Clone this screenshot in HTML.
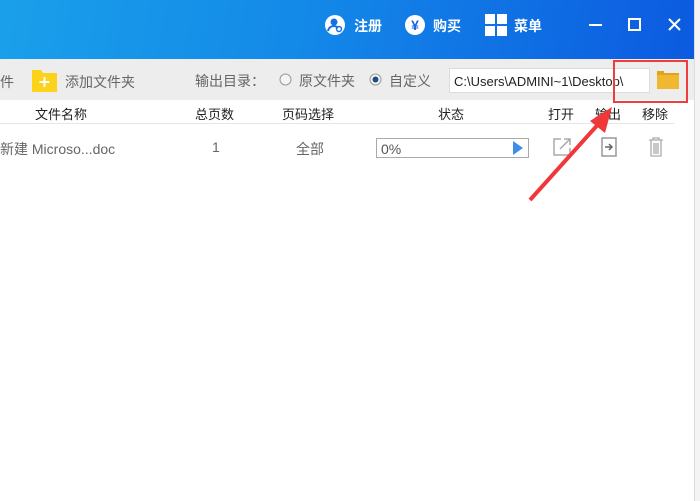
<!DOCTYPE html>
<html><head><meta charset="utf-8"><style>
*{margin:0;padding:0;box-sizing:border-box}
body{width:700px;height:501px;position:relative;overflow:hidden;background:#fff;font-family:"Liberation Sans","Noto Sans CJK SC",sans-serif;}
.t{position:absolute;white-space:nowrap}
#title{position:absolute;left:0;top:0;width:694px;height:59px;background:linear-gradient(100deg,#1aa0ea 0%,#1388e8 45%,#0c5ae0 100%)}
#tool{position:absolute;left:0;top:59px;width:694px;height:41px;background:#ededed}
#edge{position:absolute;left:694px;top:0;width:6px;height:501px;background:#f4f4f4;border-left:1px solid #ddd}
.w{color:#fff;font-size:14px;font-weight:bold}
.g{color:#666;font-size:14px}
.h{color:#222;font-size:13px}
</style></head><body>
<div id="title"></div>
<div id="tool"></div>
<div id="edge"></div>
<svg class="t" style="left:324px;top:14px" width="22" height="22"><circle cx="11" cy="11" r="10" fill="#fff"/><circle cx="10" cy="8" r="3.5" fill="#1570e6"/><path d="M4 17c1-4 4-5 6-5s3 1 4 2" stroke="#1570e6" stroke-width="2" fill="none"/><circle cx="15" cy="15" r="2.5" fill="none" stroke="#1570e6" stroke-width="1.5"/></svg>
<div class="t w" style="left:354px;top:16px">注册</div>
<svg class="t" style="left:404px;top:14px" width="22" height="22"><circle cx="11" cy="11" r="10" fill="#fff"/><text x="11" y="16" font-size="14" font-weight="bold" fill="#1565e2" text-anchor="middle" font-family="Liberation Sans">¥</text></svg>
<div class="t w" style="left:433px;top:16px">购买</div>
<svg class="t" style="left:485px;top:14px" width="22" height="22"><rect x="0" y="0" width="10" height="10" fill="#fff"/><rect x="12" y="0" width="10" height="10" fill="#fff"/><rect x="0" y="12" width="10" height="10" fill="#fff"/><rect x="12" y="12" width="10" height="10" fill="#fff"/></svg>
<div class="t w" style="left:514px;top:16px">菜单</div>
<svg class="t" style="left:586px;top:14px" width="100" height="22"><path d="M3 11h13" stroke="#fff" stroke-width="2"/><rect x="43" y="5" width="11" height="11" stroke="#fff" stroke-width="2" fill="none"/><path d="M83 5l11 11M94 5l-11 11" stroke="#fff" stroke-width="2"/></svg>
<div class="t g" style="left:0;top:72px">件</div>
<svg class="t" style="left:32px;top:68px" width="25" height="24"><path d="M0 2h9l2 3h14v19H0z" fill="#fdd21a"/><path d="M12.5 9v10M7.5 14h10" stroke="#fff" stroke-width="2"/></svg>
<div class="t g" style="left:65px;top:72px">添加文件夹</div>
<div class="t g" style="left:195px;top:71px">输出目录：</div>
<svg class="t" style="left:279px;top:73px" width="13" height="13"><circle cx="6.5" cy="6.5" r="5.5" fill="#f4f4f4" stroke="#999"/></svg>
<div class="t g" style="left:299px;top:71px">原文件夹</div>
<svg class="t" style="left:369px;top:73px" width="13" height="13"><circle cx="6.5" cy="6.5" r="5.5" fill="#f4f4f4" stroke="#999"/><circle cx="6.5" cy="6.5" r="3" fill="#1d4e80"/></svg>
<div class="t g" style="left:389px;top:71px">自定义</div>
<div class="t" style="left:449px;top:68px;width:201px;height:25px;background:#fff;border:1px solid #dcdcdc;font-size:13px;color:#222;padding:5px 0 0 4px">C:\Users\ADMINI~1\Desktop\</div>
<svg class="t" style="left:657px;top:69px" width="22" height="20"><path d="M0 2h7v2h15v16H0z" fill="#e2a21a"/><path d="M0 6h22v14H0z" fill="#f0b830"/></svg>
<div class="t h" style="left:35px;top:104px">文件名称</div>
<div class="t h" style="left:195px;top:104px">总页数</div>
<div class="t h" style="left:282px;top:104px">页码选择</div>
<div class="t h" style="left:438px;top:104px">状态</div>
<div class="t h" style="left:548px;top:104px">打开</div>
<div class="t h" style="left:595px;top:104px">输出</div>
<div class="t h" style="left:642px;top:104px">移除</div>
<div class="t" style="left:0;top:123px;width:674px;height:1px;background:#e6e6e6"></div>
<div class="t g" style="left:0;top:139px">新建 Microso...doc</div>
<div class="t g" style="left:212px;top:139px">1</div>
<div class="t g" style="left:296px;top:139px">全部</div>
<div class="t" style="left:376px;top:138px;width:153px;height:20px;border:1px solid #aaa;font-size:14px;color:#555;padding:2px 0 0 4px">0%</div>
<svg class="t" style="left:512px;top:140px" width="12" height="16"><path d="M1 1l10 7-10 7z" fill="#3d8ee8"/></svg>
<svg class="t" style="left:552px;top:137px" width="20" height="20"><path d="M9 2H2v16h16v-7" stroke="#aaa" stroke-width="1.5" fill="none"/><path d="M8 12l10-10M12 2h6v6" stroke="#aaa" stroke-width="1.5" fill="none"/></svg>
<svg class="t" style="left:601px;top:137px" width="16" height="20"><rect x="1" y="1" width="14" height="18" stroke="#999" stroke-width="1.5" fill="none"/><path d="M4 10h7M8 7l3 3-3 3" stroke="#666" stroke-width="1.5" fill="none"/></svg>
<svg class="t" style="left:648px;top:137px" width="16" height="20"><path d="M1 3h14M5 3V1h6v2M3 3v16h10V3M6 6v11M8 6v11M10 6v11" stroke="#aaa" stroke-width="1.3" fill="none"/></svg>
<div class="t" style="left:613px;top:60px;width:75px;height:43px;border:2px solid #f03c3c"></div>
<svg class="t" style="left:520px;top:95px" width="110" height="115"><path d="M10 105L82 25" stroke="#f0373a" stroke-width="4"/><path d="M92 12L70 26L85 38z" fill="#f0373a"/></svg>
</body></html>
